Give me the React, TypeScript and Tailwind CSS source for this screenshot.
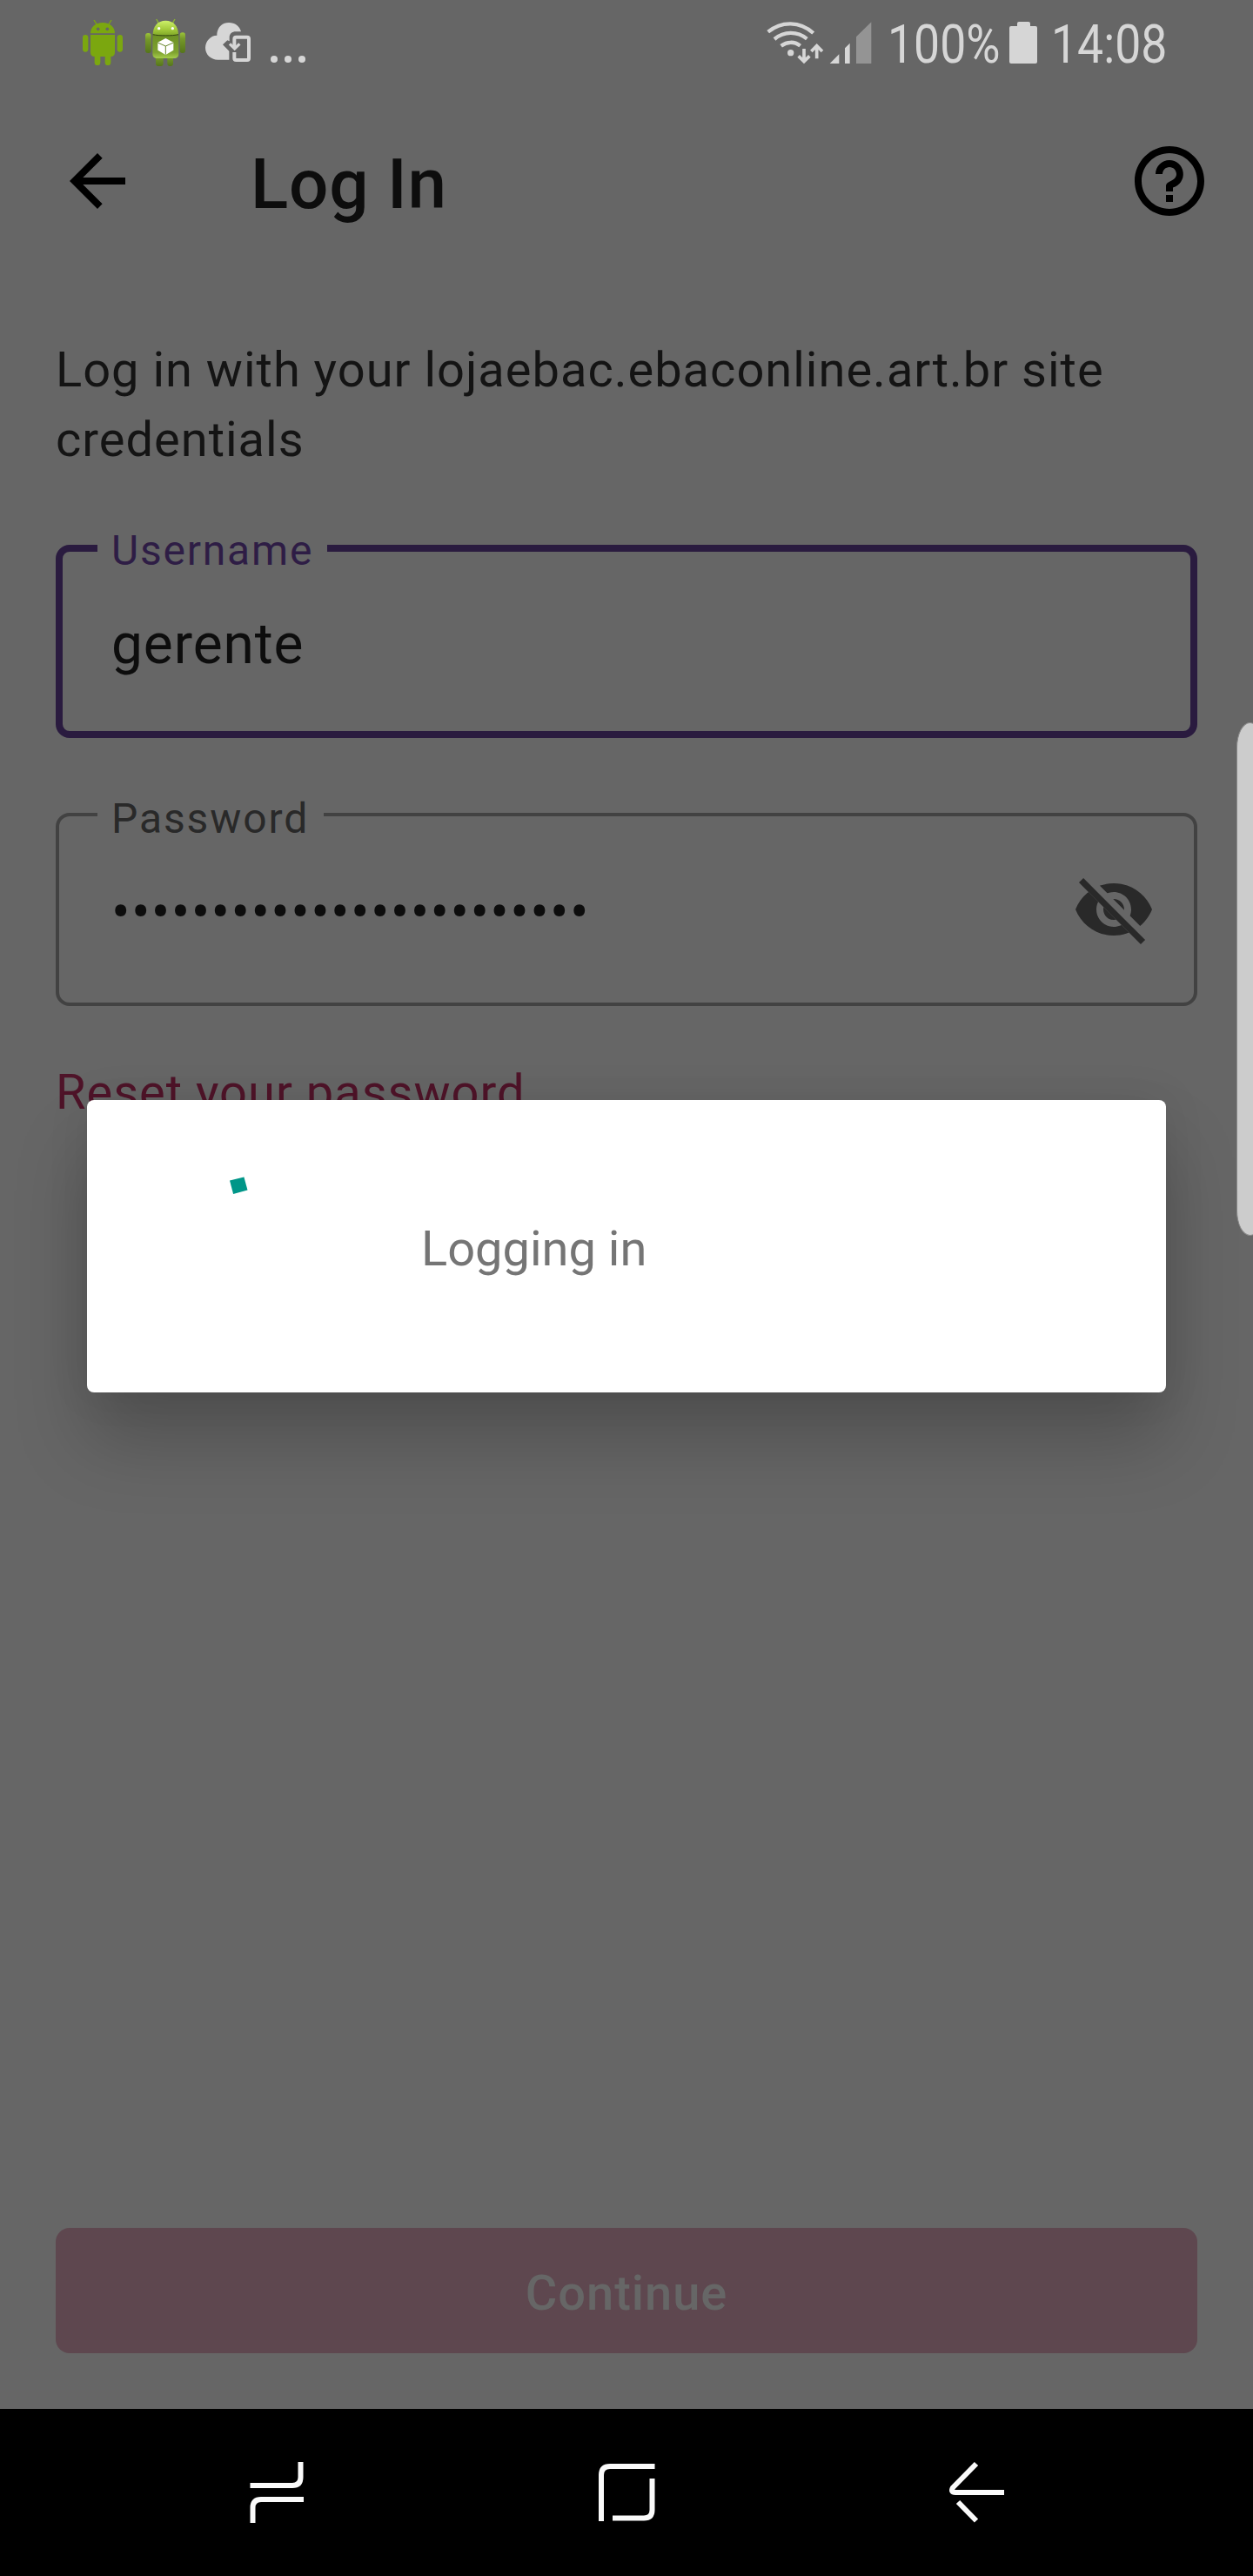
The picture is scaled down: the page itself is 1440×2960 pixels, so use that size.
import type { ReactNode } from "react";

function AndroidIcon() {
  return (
    <svg className="h-[100px] w-[74px]" viewBox="0 0 222 300">
      <g fill="#7ba70f">
        <path d="M72 115c0-22 17-37 42-37s42 15 42 37z" />
        <path d="M84 69l10 16M144 69l-10 16" stroke="#7ba70f" strokeWidth="4" />
        <rect x="45" y="120" width="19" height="59" rx="9.500" />
        <rect x="164" y="120" width="19" height="59" rx="9.500" />
        <path d="M72 120h84v60c0 10-5 15-14 15v20a10 10 0 0 1-20 0v-20h-16v20a10 10 0 0 1-20 0v-20c-9 0-14-5-14-15z" />
      </g>
      <circle cx="98" cy="100" r="5.500" fill="#666" />
      <circle cx="130" cy="100" r="5.500" fill="#666" />
    </svg>
  );
}

function AndroidBoxIcon() {
  return (
    <svg className="h-[100px] w-[74px]" viewBox="222 0 222 300">
      <defs>
        <linearGradient id="head" x1="0" y1="0" x2="0" y2="1">
          <stop offset="0" stopColor="#cdf06a" />
          <stop offset="0.6" stopColor="#a2c93a" />
          <stop offset="1" stopColor="#7fa628" />
        </linearGradient>
        <linearGradient id="limb" x1="0" y1="0" x2="0" y2="1">
          <stop offset="0" stopColor="#9cc43a" />
          <stop offset="0.3" stopColor="#76992a" />
          <stop offset="1" stopColor="#55751a" />
        </linearGradient>
        <linearGradient id="torso" x1="0" y1="0" x2="0" y2="1">
          <stop offset="0" stopColor="#6d9124" />
          <stop offset="0.75" stopColor="#7fa330" />
          <stop offset="1" stopColor="#a5cc4c" />
        </linearGradient>
      </defs>
      <path d="M299 66l9 15M363 66l-9 15" stroke="#8db52f" strokeWidth="4" />
      <rect x="297" y="185" width="26" height="43" rx="9" fill="url(#limb)" />
      <rect x="337" y="185" width="20" height="43" rx="9" fill="url(#limb)" />
      <rect x="261" y="114" width="20" height="69" rx="9" fill="url(#limb)" />
      <rect x="380" y="112" width="19" height="71" rx="9" fill="url(#limb)" />
      <path d="M286 121h90v64c0 10-6 16-16 16h-58c-10 0-16-6-16-16z" fill="url(#torso)" />
      <path d="M287 120c0-30 17-49 44-49s44 19 44 49c-20 4-68 4-88 0z" fill="url(#head)" />
      <path d="M287 119c20 5 68 5 88 0" fill="none" stroke="#33460f" strokeWidth="3" />
      <circle cx="308" cy="98" r="5" fill="#fff" />
      <circle cx="355" cy="98" r="5" fill="#fff" />
      <path d="M331 132l27 14v27l-27 16-27-16v-27z" fill="#fff" />
      <path d="M304 147l27 12 27-12M331 159v29" fill="none" stroke="#66852a" strokeWidth="3" />
    </svg>
  );
}

function CloudIcon() {
  return (
    <svg className="h-[100px] w-[72px]" viewBox="444 0 216 300">
      <path
        d="M508 122c0-26 16-44 41-44 21 0 37 12 42 31h-18c-13 0-22 8-22 20v13l-7-3-16 15 22 22v30h-39c-24 0-43-18-43-41 0-24 19-43 40-43z"
        fill="#d6d6d6"
      />
      <path
        d="M568 162v-28q0-6 6-6h38q6 0 6 6v67q0 6-6 6h-38q-6 0-6-6v-21"
        fill="none"
        stroke="#d6d6d6"
        strokeWidth="12"
      />
      <path d="M552 151l17 17 17-17" fill="none" stroke="#d6d6d6" strokeWidth="10" />
    </svg>
  );
}

function WifiIcon() {
  return (
    <svg className="h-[100px] w-[90px]" viewBox="0 0 270 300">
      <g fill="none" stroke="#d6d6d6">
        <path d="M68 110c46-38 110-38 156 4" strokeWidth="13" />
        <path d="M90 135c33-28 79-28 112-1" strokeWidth="13" />
        <path d="M113 158c20-15 46-16 66 0" strokeWidth="13" />
        <path d="M192 168v42M173 193l19 19 19-19" strokeWidth="11" />
        <path d="M236 202v-43M217 177l19-19 19 19" strokeWidth="11" />
      </g>
      <circle cx="146" cy="182" r="11" fill="#d6d6d6" />
    </svg>
  );
}

function SignalIcon() {
  return (
    <svg className="h-[100px] w-[60px]" viewBox="270 0 180 300">
      <path d="M281 219l32-32v32zM333 219v-53l17-17v70z" fill="#d6d6d6" />
      <path d="M372 219v-92l52-51v143z" fill="#949494" />
    </svg>
  );
}

function StatusBar() {
  return (
    <div className="flex h-[100px] justify-between text-[#d6d6d6]">
      <div className="flex pl-[80px]">
        <AndroidIcon />
        <AndroidBoxIcon />
        <CloudIcon />
        <div className="flex items-end gap-2 pb-7 pl-[11px]">
          <i className="size-2 rounded-full bg-[#d6d6d6]" />
          <i className="size-2 rounded-full bg-[#d6d6d6]" />
          <i className="size-2 rounded-full bg-[#d6d6d6]" />
        </div>
      </div>
      <div className="flex w-[580px]">
        <WifiIcon />
        <SignalIcon />
        <div className="w-[150px] pt-[4px] pl-[10px]">
          <span className="block w-max origin-left scale-x-[0.885] text-[60.500px] leading-[96px]">100%</span>
        </div>
        <svg className="h-[100px] w-[32px]" viewBox="0 0 32 100">
          <path d="M9 30v-3q0-2 2-2h11q2 0 2 2v3h6q2 0 2 2v39q0 2-2 2H2q-2 0-2-2V32q0-2 2-2z" fill="#d6d6d6" />
        </svg>
        <div className="pt-[4px] pl-4">
          <span className="block w-max origin-left scale-x-[0.885] text-[60.500px] leading-[96px]">14:08</span>
        </div>
      </div>
    </div>
  );
}

function Field({
  label,
  labelClass,
  boxClass,
  children,
}: {
  label: string;
  labelClass: string;
  boxClass: string;
  children: ReactNode;
}) {
  return (
    <div className={"relative flex h-[222px] items-center justify-between rounded-2xl " + boxClass}>
      <span className={"absolute bg-[#666] pl-4 text-[48px] leading-[56px] whitespace-nowrap " + labelClass}>{label}</span>
      {children}
    </div>
  );
}

function PasswordEye() {
  return (
    <svg className="size-24" viewBox="0 0 24 24">
      <clipPath id="strike">
        <path d="M2 4.270L19.730 22 22.270 19.460 4.540 1.730V1H23V23H1V4.270z" />
      </clipPath>
      <path
        clipPath="url(#strike)"
        fill="#292929"
        d="M12 4.500C7 4.500 2.730 7.610 1 12c1.730 4.390 6 7.500 11 7.500s9.270-3.110 11-7.500c-1.730-4.390-6-7.500-11-7.500zM12 17c-2.760 0-5-2.240-5-5s2.240-5 5-5 5 2.240 5 5-2.240 5-5 5zm0-8c-1.660 0-3 1.340-3 3s1.340 3 3 3 3-1.340 3-3-1.340-3-3-3z"
      />
      <path d="M3.270 4.270L19.740 20.740" stroke="#292929" strokeWidth="1.800" strokeLinecap="square" />
    </svg>
  );
}

function NavigationBar() {
  return (
    <nav className="flex h-[192px] items-center bg-black pl-[278px]">
      <svg className="size-20" viewBox="0 0 80 80" fill="none" stroke="#fafafa" strokeWidth="6">
        <path d="M9.500 32H58q9.500 0 9.500-9.500V5M12.500 75V57.500q0-9.500 9.500-9.500h49" />
      </svg>
      <svg className="ml-[322px] size-20" viewBox="0 0 80 80" fill="none" stroke="#fafafa" strokeWidth="6">
        <path d="M11 73V20q0-10 10-10h51.500M24 69.500h36q9.500 0 9.500-9.500V24" />
      </svg>
      <svg className="ml-[324px] size-20" viewBox="0 0 80 80" fill="none" stroke="#fafafa" strokeWidth="6">
        <path d="M38 7L11 34.500q-3 5.500 3 5.500h56M17 51l21 21.500" />
      </svg>
    </nav>
  );
}

export default function App() {
  return (
    <div className="relative flex h-[2960px] w-[1440px] flex-col overflow-hidden bg-[#666] font-['Roboto',sans-serif] font-normal">
      <StatusBar />

      <header className="flex h-[216px] items-center pr-12 pl-16">
        <svg className="size-24" viewBox="0 0 24 24">
          <path d="M20 11H7.830l5.590-5.590L12 4l-8 8 8 8 1.410-1.410L7.830 13H20z" />
        </svg>
        <h1 className="ml-32 flex-1 pt-[7px] text-[80px] leading-[96px] font-medium tracking-[0.800px] text-[#0d0d0d]">Log In</h1>
        <svg className="size-24" viewBox="0 0 24 24">
          <path d="M11 18h2v-2h-2zm1-16C6.480 2 2 6.480 2 12s4.480 10 10 10 10-4.480 10-10S17.520 2 12 2m0 18c-4.410 0-8-3.590-8-8s3.590-8 8-8 8 3.590 8 8-3.590 8-8 8m0-14c-2.210 0-4 1.790-4 4h2c0-1.100.9-2 2-2s2 .9 2 2-.9 1.600-1.400 1.900Q11 12.600 11 13.300V15h2v-1.140A4 4 0 0 0 12 6" />
        </svg>
      </header>

      <main className="flex flex-1 flex-col px-16 pt-[69px] pb-16">
        <p className="mb-[81px] text-[56px] leading-[80px] tracking-[1px] text-[#141414]">
          Log in with your lojaebac.ebaconline.art.br site
          <br />
          credentials
        </p>

        <Field
          label="Username"
          boxClass="border-8 border-[#2a1b3f] pl-14"
          labelClass="-top-[29px] left-10 w-[264px] text-[#2e1d45] tracking-[1.800px]"
        >
          <span className="pt-[8px] text-[64px] leading-[76px] tracking-[0.900px] text-[#0d0d0d]">gerente</span>
        </Field>

        <Field
          label="Password"
          boxClass="mt-[86px] border-4 border-[#424242] pr-11 pl-[60px]"
          labelClass="-top-[25px] left-11 w-[260px] text-[#292929] tracking-[1.900px]"
        >
          <span className="pt-[8px] text-[64px] leading-[76px] tracking-[1.320px] text-[#0d0d0d]">••••••••••••••••••••••••</span>
          <PasswordEye />
        </Field>

        <a className="mt-[59px] text-[56px] leading-[80px] tracking-[1px] text-[#4f1429]">Reset your password</a>

        <button className="mt-auto h-[144px] rounded-2xl bg-[#5e474f] pt-[6px] text-[56px] font-medium tracking-[1px] text-[#666]">
          Continue
        </button>
      </main>

      <NavigationBar />

      {/* Edge panel handle */}
      <div className="absolute top-[830px] -right-3 h-[590px] w-[31px] rounded-[16px/30px] border border-[#8a8a8a] bg-[#ccc]" />

      {/* Progress dialog */}
      <div className="absolute top-[1264px] left-[100px] flex h-[336px] w-[1240px] items-center rounded-lg bg-white shadow-[0_56px_84px_rgba(0,0,0,0.21),0_0_50px_rgba(0,0,0,0.08)]">
        <svg className="ml-24 size-48" viewBox="0 0 192 192">
          <path d="M68 20.400L84.400 16.500 88.500 31.500 72.100 36z" fill="#009688" />
        </svg>
        <span className="ml-24 pt-[5px] text-[56px] leading-[66px] text-[#757575]">Logging in</span>
      </div>
    </div>
  );
}
